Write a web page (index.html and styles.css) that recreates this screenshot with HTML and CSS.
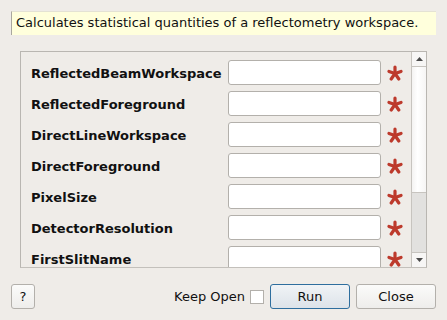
FILE: index.html
```html
<html>
  <head>
    <title>Algorithm Dialog</title>
    <link rel="stylesheet" href="styles.css">
  </head>

  <body>
    <div class="dialog">
      <div class="description">
        Calculates statistical quantities of a reflectometry workspace.
      </div>

      <div class="scroll-area">
        <div class="viewport">
          <div class="prop-row">
            <label>ReflectedBeamWorkspace</label>
            <input type="text" />
            <svg class="required" viewBox="0 0 16 16"><use href="#star" /></svg>
          </div>
          <div class="prop-row">
            <label>ReflectedForeground</label>
            <input type="text" />
            <svg class="required" viewBox="0 0 16 16"><use href="#star" /></svg>
          </div>
          <div class="prop-row">
            <label>DirectLineWorkspace</label>
            <input type="text" />
            <svg class="required" viewBox="0 0 16 16"><use href="#star" /></svg>
          </div>
          <div class="prop-row">
            <label>DirectForeground</label>
            <input type="text" />
            <svg class="required" viewBox="0 0 16 16"><use href="#star" /></svg>
          </div>
          <div class="prop-row">
            <label>PixelSize</label>
            <input type="text" />
            <svg class="required" viewBox="0 0 16 16"><use href="#star" /></svg>
          </div>
          <div class="prop-row">
            <label>DetectorResolution</label>
            <input type="text" />
            <svg class="required" viewBox="0 0 16 16"><use href="#star" /></svg>
          </div>
          <div class="prop-row">
            <label>FirstSlitName</label>
            <input type="text" />
            <svg class="required" viewBox="0 0 16 16"><use href="#star" /></svg>
          </div>
        </div>

        <div class="scrollbar">
          <div class="arrow">
            <svg viewBox="0 0 7 4"><polygon points="0,4 7,4 3.5,0" /></svg>
          </div>
          <div class="handle"></div>
          <div class="trough"></div>
          <div class="arrow">
            <svg viewBox="0 0 7 4"><polygon points="0,0 7,0 3.5,4" /></svg>
          </div>
        </div>
      </div>

      <div class="button-row">
        <button class="help-button">?</button>
        <div class="spacer"></div>
        <label class="keep-open">Keep Open <span class="checkbox"></span></label>
        <button class="run-button">Run</button>
        <button>Close</button>
      </div>
    </div>

    <svg width="0" height="0" class="defs">
      <defs>
        <g id="star" stroke="#bd3a2c" stroke-width="3.2" stroke-linecap="round">
          <line x1="8" y1="8.5" x2="8" y2="2" />
          <line x1="8" y1="8.5" x2="14" y2="6.4" />
          <line x1="8" y1="8.5" x2="2" y2="6.4" />
          <line x1="8" y1="8.5" x2="11.8" y2="14" />
          <line x1="8" y1="8.5" x2="4.2" y2="14" />
        </g>
      </defs>
    </svg>
  </body>
</html>
```

FILE: styles.css
```css
body {
  margin: 0;
  background: #efece8;
  font: 13px "DejaVu Sans", sans-serif;
  color: #111;
}

.dialog {
  display: flex;
  flex-direction: column;
  padding: 11px 11px 0 11px;
}

.description {
  height: 24px;
  box-sizing: border-box;
  padding: 3px 0 0 4px;
  background: #ffffdc;
  border-left: 1px solid #a9a79f;
  border-top: 1px solid #e4e2d4;
  white-space: nowrap;
}

.scroll-area {
  display: flex;
  margin: 16px 9px 0 9px;
  height: 217px;
  box-sizing: border-box;
  border: 1px solid #b9b6b1;
  border-bottom-color: #c3c0bb;
}

.viewport {
  flex: 1;
  overflow: hidden;
  padding: 8px 0 0 10px;
}

.prop-row {
  display: flex;
  align-items: center;
  height: 25px;
  margin-bottom: 6px;
}

.prop-row label {
  width: 197px;
  padding-top: 2px;
  font-weight: bold;
  color: #111;
}

.prop-row input {
  width: 153px;
  height: 25px;
  box-sizing: border-box;
  border: 1px solid #b3b0ab;
  border-radius: 3px;
  background: #fff;
}

.required {
  width: 16px;
  height: 16px;
  margin-left: 6px;
  margin-top: 1px;
}

.scrollbar {
  display: flex;
  flex-direction: column;
  width: 14px;
  border-left: 1px solid #c7c4bf;
}

.arrow {
  height: 14px;
  display: flex;
  align-items: center;
  justify-content: center;
  background: #f7f6f5;
}

.arrow svg {
  width: 7px;
  height: 4px;
  fill: #4a4a4a;
}

.arrow + .handle {
  border-top: 1px solid #c7c4bf;
}

.handle {
  height: 125px;
  background: linear-gradient(to right, #f4f3f2, #ffffff 40%, #f6f5f4);
  border-bottom: 1px solid #c7c4bf;
}

.trough {
  flex: 1;
  background: #e2e1df;
  border-bottom: 1px solid #c7c4bf;
}

.defs {
  position: absolute;
}

.button-row {
  display: flex;
  align-items: center;
  margin-top: 16px;
}

button {
  height: 25px;
  width: 80px;
  box-sizing: border-box;
  font: 13px "DejaVu Sans", sans-serif;
  color: #111;
  border: 1px solid #b3b0ab;
  border-radius: 3px;
  background: linear-gradient(#fbfbfa, #eeedeb);
  margin-left: 6px;
}

.help-button {
  width: 24px;
  margin-left: 0;
  padding: 0;
}

.spacer {
  flex: 1;
}

.keep-open {
  display: flex;
  align-items: center;
  gap: 5px;
}

.checkbox {
  display: inline-block;
  width: 14px;
  height: 14px;
  box-sizing: border-box;
  border: 1px solid #b3b0ab;
  background: #fff;
}

.run-button {
  border-color: #2e6e9e;
  background: linear-gradient(#f0f3f6, #dde3e9);
}
```
